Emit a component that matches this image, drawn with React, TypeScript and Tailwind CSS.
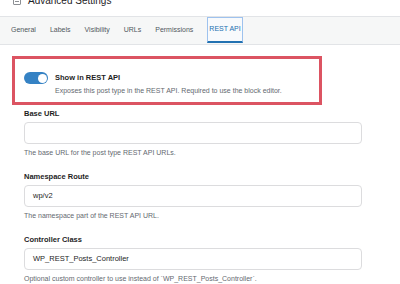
const tabs = ["General", "Labels", "Visibility", "URLs", "Permissions"];

const fields = [
  {
    label: "Base URL",
    value: "",
    help: "The base URL for the post type REST API URLs.",
  },
  {
    label: "Namespace Route",
    value: "wp/v2",
    help: "The namespace part of the REST API URL.",
  },
  {
    label: "Controller Class",
    value: "WP_REST_Posts_Controller",
    help: "Optional custom controller to use instead of `WP_REST_Posts_Controller`.",
  },
];

const App = () => {
  return (
    <div className="w-[400px] h-[284px] overflow-hidden bg-white font-['Liberation_Sans',Arial,sans-serif] text-[#1d2327]">
      {/* Section header (scrolled off the top) */}
      <div className="h-[17px] border-b border-[#e2e4e7] overflow-hidden">
        <div className="flex items-center gap-[7px] pl-[13px] mt-[-6px] h-[14px]">
          <span className="w-[8px] h-[8px] border border-[#8c8f94] rounded-[1px] flex items-center justify-center">
            <span className="w-[4px] h-px bg-[#8c8f94]" />
          </span>
          <span className="text-[10px] leading-[14px]">Advanced Settings</span>
        </div>
      </div>

      {/* Tabs */}
      <div className="h-[28px] bg-[#f6f7f7] border-b border-[#e2e4e7] flex items-stretch gap-[14px] pl-[11px]">
        {tabs.map((tab) => (
          <div key={tab} className="flex items-center text-[7px] text-[#50575e]">
            {tab}
          </div>
        ))}
        <div className="flex items-center px-px bg-[#f8fafc] border border-[#9ec2ee] border-b-[2px] border-b-[#2271b1] text-[7px] text-[#2271b1] mb-px">
          REST API
        </div>
      </div>

      {/* Highlighted toggle */}
      <div className="mt-[11px] ml-[12px] w-[310px] h-[49px] border-[3px] border-[#dc5462] flex items-start gap-[7px] pl-[9px] pt-[13px]">
        <div className="w-[24px] h-[12px] rounded-full bg-[#3582c4] flex items-center justify-end pr-[1.5px]">
          <span className="w-[9px] h-[9px] rounded-full bg-white" />
        </div>
        <div className="flex flex-col">
          <span className="text-[7.5px] leading-[10px] font-semibold text-[#1e1e1e] mt-[1px]">Show in REST API</span>
          <span className="text-[7px] leading-[10px] text-[#646970] mt-[3px]">
            Exposes this post type in the REST API. Required to use the block editor.
          </span>
        </div>
      </div>

      {/* Fields */}
      <div className="flex flex-col gap-[14px] mt-[4px] pl-[24px]">
        {fields.map((field) => (
          <div key={field.label} className="flex flex-col">
            <label className="text-[7.5px] leading-[10px] font-semibold text-[#1e1e1e]">{field.label}</label>
            <div className="mt-[3px] w-[338px] h-[22px] border border-[#dcdcde] rounded-[4px] flex items-center pl-[8px] text-[7.5px] text-[#1e1e1e]">
              {field.value}
            </div>
            <p className="mt-[4px] text-[7px] leading-[10px] text-[#646970]">{field.help}</p>
          </div>
        ))}
      </div>
    </div>
  );
};

export default App;
